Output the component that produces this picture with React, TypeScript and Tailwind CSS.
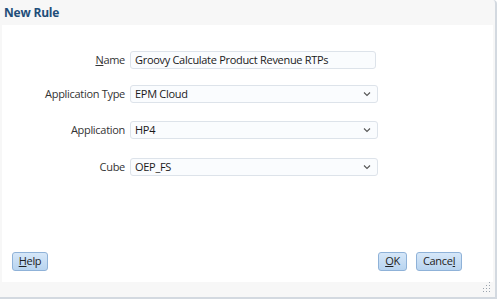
import React from "react";

const Chevron = () => (
  <svg width="8" height="6" viewBox="0 0 8 6" className="shrink-0">
    <path d="M1 1.5 L4 4.5 L7 1.5" fill="none" stroke="#555" strokeWidth="1.1" />
  </svg>
);

function Row({ label, children, u }: { label: string; children: React.ReactNode; u?: boolean }) {
  return (
    <div className="flex items-center h-[18px]">
      <div className="w-[128px] text-right pr-[5px] text-[#333]">
        {u ? (
          <>
            <span className="underline">N</span>ame
          </>
        ) : (
          label
        )}
      </div>
      {children}
    </div>
  );
}

function Select({ value, w }: { value: string; w: string }) {
  return (
    <div className={`${w} h-[18px] flex items-center justify-between pl-[4px] pr-[6px] border border-[#dde3ea] rounded-[3px] bg-[#fafcfe] text-[#1a1a1a]`}>
      <span>{value}</span>
      <Chevron />
    </div>
  );
}

function Btn({ children, w }: { children: React.ReactNode; w: string }) {
  return (
    <div className={`${w} h-[19px] flex items-center justify-center rounded-[3px] border border-[#8fb2d8] bg-gradient-to-b from-[#d6e7f8] to-[#b8d4f0] text-[#222]`}>
      {children}
    </div>
  );
}

export default function App() {
  return (
    <div
      className="w-[497px] h-[299px] bg-white relative overflow-hidden text-[11px] tracking-[-0.3px]"
      style={{ fontFamily: '"Open Sans", "Noto Sans", sans-serif' }}
    >
      <div className="absolute inset-0 bg-[#f7f7f7] border-r-[2px] border-b-[2px] border-[#d3d9e0] rounded-tr-[4px] flex flex-col">
        <div className="h-[25px] flex items-center pl-[4px] text-[12px] font-bold text-[#1f4e79] tracking-[-0.2px]">
          New Rule
        </div>
        <div className="mx-[2px] h-[257px] bg-white flex flex-col">
          <div className="pt-[26px] flex flex-col gap-[16px]">
            <Row label="Name" u>
              <div className="w-[246px] h-[18px] flex items-center pl-[4px] border border-[#dde3ea] rounded-[3px] bg-[#fafcfe] text-[#1a1a1a]">
                Groovy Calculate Product Revenue RTPs
              </div>
            </Row>
            <Row label="Application Type">
              <Select value="EPM Cloud" w="w-[248px]" />
            </Row>
            <div className="mt-[2px]">
              <Row label="Application">
                <Select value="HP4" w="w-[248px]" />
              </Row>
            </div>
            <div className="mt-[3px]">
              <Row label="Cube">
                <Select value="OEP_FS" w="w-[248px]" />
              </Row>
            </div>
          </div>
          <div className="mt-auto mb-[11px] flex items-center pl-[10px]">
            <Btn w="w-[36px]">
              <span className="underline">H</span>elp
            </Btn>
            <div className="flex-1" />
            <Btn w="w-[29px]">
              <span className="underline">O</span>K
            </Btn>
            <div className="w-[9px]" />
            <Btn w="w-[46px]">
              Cance<span className="underline">l</span>
            </Btn>
            <div className="w-[31px]" />
          </div>
        </div>
        <svg className="absolute right-[4px] bottom-[5px]" width="10" height="10" viewBox="0 0 10 10">
          {[
            [8, 0], [8, 3], [5, 3], [8, 6], [5, 6], [2, 6], [8, 9], [5, 9], [2, 9], [-1, 9],
          ].map(([x, y], i) => (
            <rect key={i} x={x} y={y} width="1" height="1" fill="#9aa3ad" />
          ))}
        </svg>
      </div>
    </div>
  );
}
